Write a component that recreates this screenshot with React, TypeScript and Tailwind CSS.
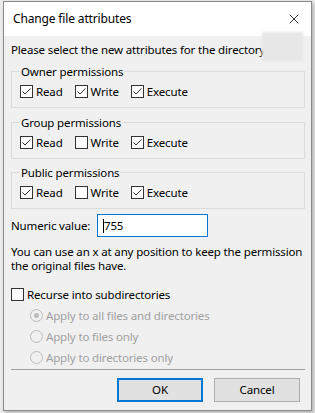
import { X } from 'lucide-react'

const font = { fontFamily: '"Noto Sans", "Segoe UI", Arial, sans-serif' }

function Box({ checked, label }: { checked: boolean; label: string }) {
  return (
    <label className="flex items-center h-[15px]">
      <span className="flex h-[13px] w-[13px] items-center justify-center border border-[#333333] bg-white">
        {checked && (
          <svg width="11" height="11" viewBox="0 0 11 11" fill="none">
            <path d="M1.5 5.5 L4 8 L9.5 2.5" stroke="#333333" strokeWidth="1" />
          </svg>
        )}
      </span>
      <span className="ml-[3px]">{label}</span>
    </label>
  )
}

function Group({ title, perms, className }: { title: string; perms: boolean[]; className?: string }) {
  const names = ['Read', 'Write', 'Execute']
  return (
    <fieldset className={`border border-[#dcdcdc] ${className ?? ''}`}>
      <legend className="ml-[8px] px-[1px] leading-[15px]">{title}</legend>
      <div className="flex gap-[12px] pl-[8px] pt-[5px] pb-[8px]">
        {names.map((n, i) => (
          <Box key={n} checked={perms[i]} label={n} />
        ))}
      </div>
    </fieldset>
  )
}

function Radio({ on, label }: { on?: boolean; label: string }) {
  return (
    <div className="flex items-center h-[21px] pl-[19px] text-[#a0a0a0]">
      <span className="flex h-[13px] w-[13px] items-center justify-center rounded-full border border-[#bcbcbc] bg-[#f0f0f0]">
        {on && <span className="h-[5px] w-[5px] rounded-full bg-[#bcbcbc]" />}
      </span>
      <span className="ml-[3px]">{label}</span>
    </div>
  )
}

export default function App() {
  return (
    <div
      className="h-[413px] w-[315px] bg-[#ececec] pt-[1px] pl-[3px] text-[11.5px] tracking-[-0.15px] text-black"
      style={font}
    >
      <div className="relative flex h-[410px] w-[309px] flex-col border border-[#8a8a8a] bg-[#f0f0f0] shadow-[2px_2px_4px_rgba(0,0,0,0.25)]">
        <div className="flex h-[34px] items-center justify-between bg-white pl-[9px] pr-[9px]">
          <span className="text-[12px]">Change file attributes</span>
          <X size={16} strokeWidth={1.2} className="text-black" />
        </div>

        <div className="flex flex-1 flex-col px-[7px] pr-[6px]">
          <p className="mt-[6px] leading-[15px] whitespace-nowrap overflow-hidden">
            Please select the new attributes for the directory
          </p>

          <div className="mt-[7px] flex flex-col">
            <Group title="Owner permissions" perms={[true, true, true]} />
            <Group title="Group permissions" perms={[true, false, true]} className="mt-[7px]" />
            <Group title="Public permissions" perms={[true, false, true]} className="mt-[6px]" />
          </div>

          <div className="mt-[5px] flex items-center">
            <span className="w-[86px]">Numeric value:</span>
            <div className="flex h-[23px] w-[111px] items-center border border-[#0078d7] bg-white pl-[5px]">
              <span className="h-[14px] w-px bg-black" />
              <span>755</span>
            </div>
          </div>

          <p className="mt-[8px] leading-[14px]">
            You can use an x at any position to keep the permission the original files have.
          </p>

          <div className="mt-[14px]">
            <Box checked={false} label="Recurse into subdirectories" />
          </div>

          <div className="mt-[3px] flex flex-col">
            <Radio on label="Apply to all files and directories" />
            <Radio label="Apply to files only" />
            <Radio label="Apply to directories only" />
          </div>

          <div className="mt-[1px] h-px bg-[#a0a0a0]" />

          <div className="mt-[8px] flex justify-end gap-[11px] pr-[5px]">
            <button className="h-[24px] w-[86px] border-2 border-[#0078d7] bg-[#e1e1e1]">OK</button>
            <button className="h-[24px] w-[86px] border border-[#adadad] bg-[#e1e1e1]">Cancel</button>
          </div>
        </div>

        <div className="absolute left-[258px] top-[30px] h-[29px] w-[41px] bg-[#e7e7e7] blur-[1px]" />
      </div>
    </div>
  )
}
